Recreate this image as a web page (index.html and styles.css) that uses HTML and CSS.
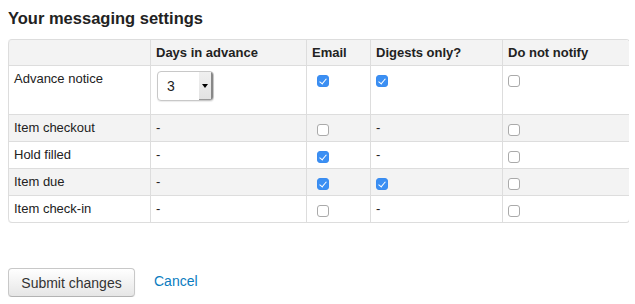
FILE: index.html
```html
<!DOCTYPE html>
<html>
<head>
<meta charset="utf-8">
<link rel="stylesheet" href="styles.css">
</head>
<body>
<h2 class="title">Your messaging settings</h2>
<table class="settings">
  <colgroup>
    <col class="c1"><col class="c2"><col class="c3"><col class="c4"><col class="c5">
  </colgroup>
  <thead>
    <tr><th></th><th>Days in advance</th><th>Email</th><th>Digests only?</th><th>Do not notify</th></tr>
  </thead>
  <tbody>
    <tr class="tall">
      <td>Advance notice</td>
      <td><div class="select"><span class="sel-val">3</span><span class="sel-btn"><span class="caret"></span></span></div></td>
      <td class="email"><input type="checkbox" class="cb" checked></td>
      <td><input type="checkbox" class="cb" checked></td>
      <td><input type="checkbox" class="cb"></td>
    </tr>
    <tr class="odd">
      <td>Item checkout</td><td>-</td>
      <td class="email"><input type="checkbox" class="cb"></td><td>-</td>
      <td><input type="checkbox" class="cb"></td>
    </tr>
    <tr>
      <td>Hold filled</td><td>-</td>
      <td class="email"><input type="checkbox" class="cb" checked></td><td>-</td>
      <td><input type="checkbox" class="cb"></td>
    </tr>
    <tr class="odd">
      <td>Item due</td><td>-</td>
      <td class="email"><input type="checkbox" class="cb" checked></td>
      <td><input type="checkbox" class="cb" checked></td>
      <td><input type="checkbox" class="cb"></td>
    </tr>
    <tr class="last">
      <td>Item check-in</td><td>-</td>
      <td class="email"><input type="checkbox" class="cb"></td><td>-</td>
      <td><input type="checkbox" class="cb"></td>
    </tr>
  </tbody>
</table>
<div class="actions">
  <button class="btn">Submit changes</button>
  <a class="cancel" href="#">Cancel</a>
</div>
</body>
</html>
```

FILE: styles.css
```css
body {
  margin: 8px 6px 8px 8px;
  font-family: "Liberation Sans", Arial, sans-serif;
  font-size: 13px;
  color: #333;
  background: #fff;
}
.title {
  margin: 0;
  font-size: 16.5px;
  line-height: 20px;
  font-weight: bold;
  color: #222;
}
.settings {
  margin-top: 11px;
  width: 621px;
  border-collapse: separate;
  border-spacing: 0;
  border: 1px solid #ddd;
  border-left: 0;
  border-radius: 4px;
  table-layout: fixed;
}
.c1 { width: 142px; }
.c2 { width: 156px; }
.c3 { width: 64px; }
.c4 { width: 132px; }
.c5 { width: 127px; }
.settings th,
.settings td {
  border-left: 1px solid #ddd;
  border-top: 1px solid #ddd;
  padding: 4px 5px;
  line-height: 18px;
  text-align: left;
  vertical-align: top;
}
.settings thead th {
  border-top: 0;
  background: #f3f3f3;
  font-weight: bold;
  color: #222;
  padding: 4px 5px 3px;
}
.settings thead th:first-child { border-top-left-radius: 4px; }
.settings thead th:last-child { border-top-right-radius: 4px; }
.settings tr.last td:first-child { border-bottom-left-radius: 4px; }
.settings tr.last td:last-child { border-bottom-right-radius: 4px; }
.settings tr.odd td { background: #f3f3f3; }
.settings td { color: #222; }
.tall td { height: 40px; }
.select {
  display: flex;
  width: 55px;
  height: 28px;
  margin: 1px 0 0 1px;
  border: 1px solid #c8c8c8;
  border-radius: 4px;
  background: #fff;
  overflow: hidden;
  box-shadow: 0 1px 1px rgba(0,0,0,0.08);
}
.sel-val {
  flex: 1;
  font-size: 14px;
  line-height: 28px;
  padding-left: 9px;
  color: #222;
}
.sel-btn {
  width: 12px;
  background: linear-gradient(#f0f0f0, #e2e2e2);
  border-right: 2px solid #888;
  border-bottom: 1px solid #999;
  display: flex;
  align-items: center;
  justify-content: center;
}
.caret {
  width: 0;
  height: 0;
  border-left: 3px solid transparent;
  border-right: 3px solid transparent;
  border-top: 4px solid #000;
  margin-top: 1px;
}
.cb {
  -webkit-appearance: none;
  appearance: none;
  width: 12px;
  height: 12px;
  margin: 5px 0 0 0;
  border: 1px solid #aaa;
  border-radius: 3px;
  background: #fff;
  position: relative;
  display: block;
}
.email .cb { margin-left: 5px; }
.cb:checked {
  border-color: #3a8cf0;
  background: #3b8ff3;
}
.cb:checked::after {
  content: "";
  position: absolute;
  left: 3px;
  top: 1px;
  width: 3px;
  height: 6px;
  border-right: 1.5px solid #fff;
  border-bottom: 1.5px solid #fff;
  transform: rotate(40deg);
}
.actions {
  margin-top: 45px;
  display: flex;
  align-items: center;
}
.btn {
  font-family: "Liberation Sans", Arial, sans-serif;
  font-size: 14px;
  color: #333;
  height: 29px;
  width: 127px;
  padding: 0;
  border: 1px solid #c8c8c8;
  border-bottom-color: #b3b3b3;
  border-radius: 4px;
  background: linear-gradient(#ffffff, #e6e6e6);
  box-shadow: inset 0 1px 0 rgba(255,255,255,.2), 0 1px 2px rgba(0,0,0,.05);
}
.cancel {
  margin-left: 19px;
  font-size: 14px;
  color: #0a7cc0;
  text-decoration: none;
  margin-top: -3px;
}
```
